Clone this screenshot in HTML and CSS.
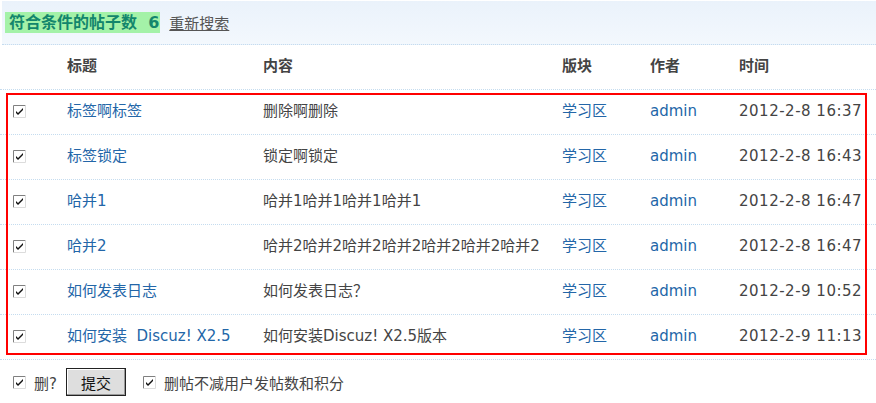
FILE: index.html
```html
<!DOCTYPE html>
<html lang="zh-CN">
<head>
    <meta charset="UTF-8">
    <title>搜索帖子</title>
    <link rel="stylesheet" href="styles.css">
</head>
<body>
    <div class="summary">
        <span class="count">符合条件的帖子数&nbsp; 6</span>
        <a href="#" class="again">重新搜索</a>
    </div>
    <div class="list">
        <div class="row head">
            <span></span>
            <span>标题</span>
            <span>内容</span>
            <span>版块</span>
            <span>作者</span>
            <span>时间</span>
        </div>
        <div class="row">
            <span class="check"><svg viewBox="0 0 13 13"><path d="M0.5 12.5V0.5H12.5" class="lt"/><path d="M12.5 0.5V12.5H0.5" class="rb"/><path d="M3 6l2 2 5-5v2l-5 5-2-2z" class="tick"/></svg></span>
            <a href="#">标签啊标签</a>
            <span>删除啊删除</span>
            <a href="#">学习区</a>
            <a href="#">admin</a>
            <span class="time">2012-2-8 16:37</span>
        </div>
        <div class="row">
            <span class="check"><svg viewBox="0 0 13 13"><path d="M0.5 12.5V0.5H12.5" class="lt"/><path d="M12.5 0.5V12.5H0.5" class="rb"/><path d="M3 6l2 2 5-5v2l-5 5-2-2z" class="tick"/></svg></span>
            <a href="#">标签锁定</a>
            <span>锁定啊锁定</span>
            <a href="#">学习区</a>
            <a href="#">admin</a>
            <span class="time">2012-2-8 16:43</span>
        </div>
        <div class="row">
            <span class="check"><svg viewBox="0 0 13 13"><path d="M0.5 12.5V0.5H12.5" class="lt"/><path d="M12.5 0.5V12.5H0.5" class="rb"/><path d="M3 6l2 2 5-5v2l-5 5-2-2z" class="tick"/></svg></span>
            <a href="#">哈并1</a>
            <span>哈并1哈并1哈并1哈并1</span>
            <a href="#">学习区</a>
            <a href="#">admin</a>
            <span class="time">2012-2-8 16:47</span>
        </div>
        <div class="row">
            <span class="check"><svg viewBox="0 0 13 13"><path d="M0.5 12.5V0.5H12.5" class="lt"/><path d="M12.5 0.5V12.5H0.5" class="rb"/><path d="M3 6l2 2 5-5v2l-5 5-2-2z" class="tick"/></svg></span>
            <a href="#">哈并2</a>
            <span>哈并2哈并2哈并2哈并2哈并2哈并2哈并2</span>
            <a href="#">学习区</a>
            <a href="#">admin</a>
            <span class="time">2012-2-8 16:47</span>
        </div>
        <div class="row">
            <span class="check"><svg viewBox="0 0 13 13"><path d="M0.5 12.5V0.5H12.5" class="lt"/><path d="M12.5 0.5V12.5H0.5" class="rb"/><path d="M3 6l2 2 5-5v2l-5 5-2-2z" class="tick"/></svg></span>
            <a href="#">如何发表日志</a>
            <span>如何发表日志？</span>
            <a href="#">学习区</a>
            <a href="#">admin</a>
            <span class="time">2012-2-9 10:52</span>
        </div>
        <div class="row">
            <span class="check"><svg viewBox="0 0 13 13"><path d="M0.5 12.5V0.5H12.5" class="lt"/><path d="M12.5 0.5V12.5H0.5" class="rb"/><path d="M3 6l2 2 5-5v2l-5 5-2-2z" class="tick"/></svg></span>
            <a href="#">如何安装&nbsp; Discuz! X2.5</a>
            <span>如何安装Discuz! X2.5版本</span>
            <a href="#">学习区</a>
            <a href="#">admin</a>
            <span class="time">2012-2-9 11:13</span>
        </div>
        <div class="mark"></div>
    </div>
    <div class="actions">
        <span class="check"><svg viewBox="0 0 13 13"><path d="M0.5 12.5V0.5H12.5" class="lt"/><path d="M12.5 0.5V12.5H0.5" class="rb"/><path d="M3 6l2 2 5-5v2l-5 5-2-2z" class="tick"/></svg></span>
        <span class="label">删?</span>
        <button type="button" class="submit">提交</button>
        <span class="check"><svg viewBox="0 0 13 13"><path d="M0.5 12.5V0.5H12.5" class="lt"/><path d="M12.5 0.5V12.5H0.5" class="rb"/><path d="M3 6l2 2 5-5v2l-5 5-2-2z" class="tick"/></svg></span>
        <span class="label">删帖不减用户发帖数和积分</span>
    </div>
</body>
</html>
```

FILE: styles.css
```css
body {
    margin: 0;
    font-family: "DejaVu Sans", "Noto Sans CJK SC", sans-serif;
    font-size: 15px;
    color: #444;
    background: #fff;
}
a {
    color: #2366a8;
    text-decoration: none;
}
.summary {
    margin: 1px 0 0 2px;
    height: 43px;
    display: flex;
    align-items: center;
    gap: 9px;
    padding-left: 3px;
    background: linear-gradient(to bottom, #eaf2fb, #f3f8fd);
    border-bottom: 1px dotted #c5dcef;
}
.count {
    background: #a4f2a8;
    color: #13866c;
    font-weight: bold;
    font-size: 16px;
    padding: 0 1px 0 4px;
    line-height: 21px;
}
.again {
    color: #555;
    text-decoration: underline;
}
.list {
    position: relative;
}
.row {
    display: grid;
    grid-template-columns: 54px 196px 299px 88px 89px 1fr;
    align-items: center;
    height: 44px;
    padding-left: 13px;
    border-bottom: 1px dotted #c5dcef;
    white-space: nowrap;
    line-height: 20px;
}
.row > * {
    margin-top: -2px;
}
.row.head {
    font-weight: bold;
    color: #444;
}
.check {
    display: inline-flex;
    width: 13px;
    height: 13px;
}
.check svg {
    width: 13px;
    height: 13px;
    display: block;
    background: #fff;
}
.check .lt {
    fill: none;
    stroke: #808080;
}
.check .rb {
    fill: none;
    stroke: #dcdcdc;
}
.check .tick {
    fill: #111;
}
.time {
    color: #444;
    letter-spacing: 0.5px;
}
.mark {
    position: absolute;
    left: 6px;
    right: 9px;
    top: 48px;
    height: 258px;
    border: 2px solid #f00;
    pointer-events: none;
}
.actions {
    display: flex;
    align-items: center;
    height: 40px;
    padding: 2px 0 0 13px;
}
.actions .label {
    margin-left: 8px;
    color: #444;
}
.submit {
    margin: 0 17px 0 9px;
    width: 60px;
    height: 28px;
    background: #dedede;
    border: 1px solid #222;
    box-shadow: inset -1px -1px 0 #999, inset 1px 1px 0 #fff;
    font-family: "DejaVu Sans", "Noto Sans CJK SC", sans-serif;
    font-size: 15px;
    color: #111;
    padding: 0;
}
```
